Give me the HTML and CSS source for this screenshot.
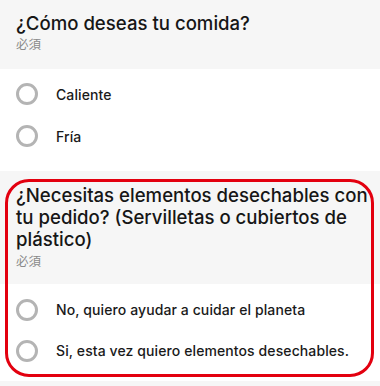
FILE: index.html
```html
<!DOCTYPE html>
<html>
<head>
    <meta charset="UTF-8">
    <title>Opciones del pedido</title>
    <link rel="stylesheet" href="styles.css">
</head>
<body>
    <div class="question">
        <div class="q-head">
            <h2 class="q-title">¿Cómo deseas tu comida?</h2>
            <div class="q-req">必須</div>
        </div>
        <div class="q-options first">
            <label class="option"><span class="radio"></span>Caliente</label>
            <label class="option"><span class="radio"></span>Fría</label>
        </div>
    </div>

    <div class="question marked">
        <div class="q-head second">
            <h2 class="q-title">¿Necesitas elementos desechables con tu pedido? (Servilletas o cubiertos de plástico)</h2>
            <div class="q-req">必須</div>
        </div>
        <div class="q-options second">
            <label class="option"><span class="radio"></span>No, quiero ayudar a cuidar el planeta</label>
            <label class="option"><span class="radio"></span>Si, esta vez quiero elementos desechables.</label>
        </div>
        <div class="highlight"></div>
    </div>
    <div class="divider"></div>
</body>
</html>
```

FILE: styles.css
```css
body { margin: 0; background: #fff; font-family: Inter, "Noto Sans", "Noto Sans CJK JP", sans-serif; color: #141414; }
.question { position: relative; }
.q-head { background: #f6f6f6; padding: 12px 16px 16px; }
.q-head.second { padding: 13px 12px 14px 16px; }
.q-title { margin: 0; font-size: 18.6px; line-height: 22px; font-weight: 500; color: #161616; }
.q-req { font-family: "Noto Sans CJK JP", sans-serif; font-size: 12.5px; line-height: 18px; color: #8a8a8a; margin-top: 1px; }
.q-head.second .q-req { margin-top: 2px; }
.q-options { padding: 4px 16px 14px; }
.q-options.second { padding: 5px 16px 10px; }
.option { display: flex; align-items: center; height: 42px; font-size: 14px; letter-spacing: 0.1px; font-weight: 500; color: #1a1a1a; }
.q-options.second .option { height: 41px; }
.radio { width: 16px; height: 16px; border: 3px solid #b4b4b4; border-radius: 50%; margin-right: 18px; flex: none; }
.highlight { position: absolute; left: 5px; top: 8px; right: 6px; bottom: 4px; border: 3px solid #e3000f; border-radius: 24px; pointer-events: none; }
.divider { height: 8px; background: #f6f6f6; }
```
